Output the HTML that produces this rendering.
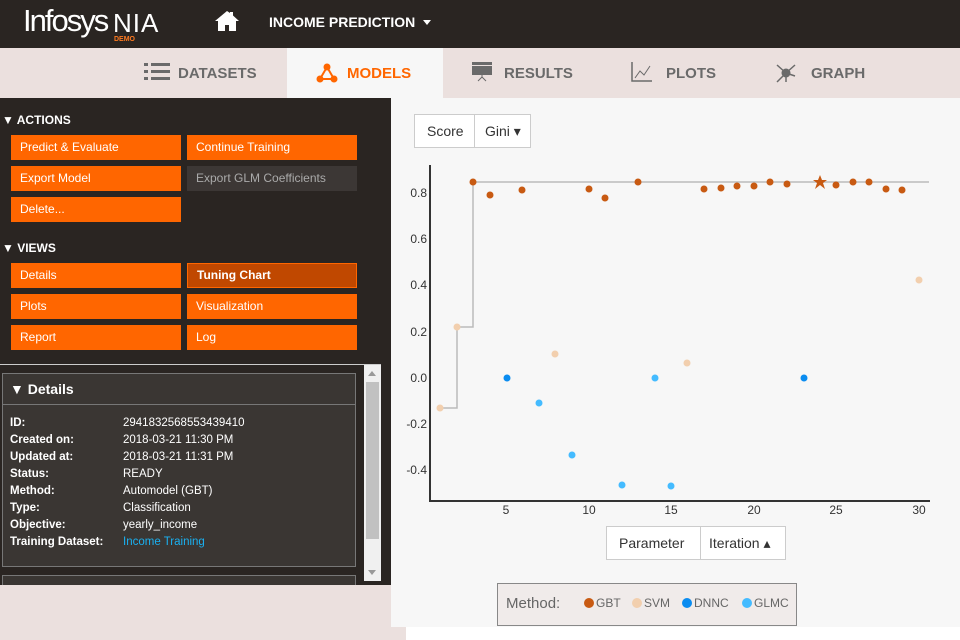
<!DOCTYPE html>
<html><head><meta charset="utf-8"><style>
*{box-sizing:border-box;margin:0;padding:0}
body{width:960px;height:640px;overflow:hidden;background:#fff;font-family:"Liberation Sans","DejaVu Sans",sans-serif;position:relative}
.abs{position:absolute}
.top{left:0;top:0;width:960px;height:48px;background:#2a2522}
.tabs{left:0;top:48px;width:960px;height:50px;background:#ebe0de}
.tab{position:absolute;top:48px;height:50px;line-height:52px;font-weight:bold;font-size:15px;color:#6a6a6a}
.side{left:0;top:98px;width:391px;height:487px;background:#2a2522}
.btn{position:absolute;height:25px;width:170px;background:#ff6600;color:#fff;font-size:12px;line-height:25px;padding-left:9px}
.hd{position:absolute;color:#fff;font-weight:bold;font-size:12px}
.lab{position:absolute;left:10px;color:#fff;font-weight:bold;font-size:11.5px}
.val{position:absolute;left:123px;color:#fff;font-size:11.5px}
</style></head><body>
<div class="abs top"></div>
<div class="abs" style="left:23px;top:3px;color:#fff;font-size:31px;letter-spacing:-2px;font-family:'Liberation Sans Narrow','Liberation Sans',sans-serif">Infosys</div>
<div class="abs" style="left:113px;top:8px;color:#fff;font-size:26px;font-weight:300;letter-spacing:1px">NIA</div>
<div class="abs" style="left:114px;top:36px;color:#ff7a20;font-size:7px;font-weight:bold">DEMO</div>
<svg class="abs" style="left:214px;top:10px" width="26" height="22" viewBox="0 0 26 22"><path d="M13 1L1 11h3v10h7v-6h4v6h7V11h3L19 5.5V2h-3v1z" fill="#fff"/></svg>
<div class="abs" style="left:269px;top:14px;color:#fff;font-weight:bold;font-size:14px">INCOME PREDICTION</div>
<div class="abs" style="left:423px;top:20px;border:4px solid transparent;border-top:5px solid #fff;border-bottom:0"></div>

<div class="abs tabs"></div>
<div class="abs" style="left:287px;top:48px;width:156px;height:50px;background:#f7f7f7"></div>
<svg class="abs" style="left:144px;top:63px" width="26" height="17"><g fill="#6a6a6a"><rect x="0" y="0" width="4" height="3"/><rect x="0" y="7" width="4" height="3"/><rect x="0" y="14" width="4" height="3"/><rect x="7" y="0" width="19" height="3"/><rect x="7" y="7" width="19" height="3"/><rect x="7" y="14" width="19" height="3"/></g></svg>
<div class="tab" style="left:178px">DATASETS</div>
<svg class="abs" style="left:316px;top:63px" width="22" height="20"><g stroke="#f60" stroke-width="2"><line x1="11" y1="4" x2="4" y2="16"/><line x1="11" y1="4" x2="18" y2="16"/><line x1="4" y1="16" x2="18" y2="16"/></g><g fill="#f60"><circle cx="11" cy="4" r="3.5"/><circle cx="4" cy="16" r="3.5"/><circle cx="18" cy="16" r="3.5"/></g></svg>
<div class="tab" style="left:347px;color:#f60">MODELS</div>
<svg class="abs" style="left:472px;top:62px" width="22" height="20"><rect x="0" y="0" width="20" height="3" fill="#6a6a6a"/><rect x="0" y="4" width="20" height="9" fill="#6a6a6a"/><path d="M10 13v3M10 15l-4 4M10 15l4 4" stroke="#6a6a6a"/></svg>
<div class="tab" style="left:504px">RESULTS</div>
<svg class="abs" style="left:631px;top:62px" width="22" height="20"><path d="M1 0v19h20" stroke="#6a6a6a" fill="none" stroke-width="1.5"/><path d="M4 16l5-7 4 4 6-9" stroke="#6a6a6a" fill="none"/></svg>
<div class="tab" style="left:666px">PLOTS</div>
<svg class="abs" style="left:775px;top:62px" width="22" height="22"><g stroke="#6a6a6a" stroke-width="1.5"><line x1="11" y1="11" x2="2" y2="3"/><line x1="11" y1="11" x2="20" y2="3"/><line x1="11" y1="11" x2="2" y2="20"/><line x1="11" y1="11" x2="20" y2="14"/><line x1="11" y1="11" x2="11" y2="20"/></g><circle cx="11" cy="11" r="4.5" fill="#6a6a6a"/></svg>
<div class="tab" style="left:811px">GRAPH</div>

<div class="abs side"></div>
<div class="hd" style="left:2px;top:113px">▼ ACTIONS</div>
<div class="btn" style="left:11px;top:135px">Predict &amp; Evaluate</div>
<div class="btn" style="left:187px;top:135px">Continue Training</div>
<div class="btn" style="left:11px;top:166px">Export Model</div>
<div class="btn" style="left:187px;top:166px;background:#3c3735;color:#aaa">Export GLM Coefficients</div>
<div class="btn" style="left:11px;top:197px">Delete...</div>
<div class="hd" style="left:2px;top:241px">▼ VIEWS</div>
<div class="btn" style="left:11px;top:263px">Details</div>
<div class="btn" style="left:187px;top:263px;background:#c04800;border:1px solid #f60;font-weight:bold;line-height:23px">Tuning Chart</div>
<div class="btn" style="left:11px;top:294px">Plots</div>
<div class="btn" style="left:187px;top:294px">Visualization</div>
<div class="btn" style="left:11px;top:325px">Report</div>
<div class="btn" style="left:187px;top:325px">Log</div>
<div class="abs" style="left:0;top:364px;width:381px;height:1px;background:#ccc"></div>
<div class="abs" style="left:364px;top:365px;width:17px;height:216px;background:#f0f0f0"></div>
<div class="abs" style="left:366px;top:382px;width:13px;height:157px;background:#c1c1c1"></div>
<div class="abs" style="left:368px;top:371px;border:4px solid transparent;border-bottom:5px solid #999;border-top:0"></div>
<div class="abs" style="left:368px;top:570px;border:4px solid transparent;border-top:5px solid #999;border-bottom:0"></div>
<div class="abs" style="left:2px;top:373px;width:354px;height:194px;background:#3a3633;border:1px solid #777"></div>
<div class="abs" style="left:2px;top:404px;width:354px;height:1px;background:#777"></div>
<div class="abs" style="left:2px;top:575px;width:354px;height:10px;background:#3a3633;border:1px solid #777;border-bottom:0"></div>
<div class="hd" style="left:10px;top:381px;font-size:14px">▼ Details</div>
<div class="lab" style="top:417px">ID:</div><div class="val" style="top:417px">2941832568553439410</div>
<div class="lab" style="top:434px">Created on:</div><div class="val" style="top:434px">2018-03-21 11:30 PM</div>
<div class="lab" style="top:451px">Updated at:</div><div class="val" style="top:451px">2018-03-21 11:31 PM</div>
<div class="lab" style="top:468px">Status:</div><div class="val" style="top:468px">READY</div>
<div class="lab" style="top:485px">Method:</div><div class="val" style="top:485px">Automodel (GBT)</div>
<div class="lab" style="top:502px">Type:</div><div class="val" style="top:502px">Classification</div>
<div class="lab" style="top:519px">Objective:</div><div class="val" style="top:519px">yearly_income</div>
<div class="lab" style="top:536px">Training Dataset:</div><div class="val" style="top:536px;color:#1ab0f0">Income Training</div>
<div class="abs" style="left:0;top:585px;width:406px;height:55px;background:#ebe0de"></div>

<div class="abs" style="left:391px;top:98px;width:569px;height:529px;background:#f7f7f7"></div>
<div class="abs" style="left:414px;top:114px;width:117px;height:34px;border:1px solid #ccc;background:#fff"></div>
<div class="abs" style="left:474px;top:114px;width:1px;height:34px;background:#ccc"></div>
<div class="abs" style="left:427px;top:123px;font-size:14px;color:#333">Score</div>
<div class="abs" style="left:485px;top:123px;font-size:14px;color:#333">Gini ▾</div>
<div class="abs" style="left:606px;top:526px;width:180px;height:34px;border:1px solid #ccc;background:#fff"></div>
<div class="abs" style="left:700px;top:526px;width:1px;height:34px;background:#ccc"></div>
<div class="abs" style="left:619px;top:535px;font-size:14px;color:#333">Parameter</div>
<div class="abs" style="left:709px;top:535px;font-size:14px;color:#333">Iteration ▴</div>
<div class="abs" style="left:497px;top:583px;width:300px;height:43px;border:1px solid #888;background:#f0ebea"></div>
<div class="abs" style="left:506px;top:595px;font-size:15px;color:#666">Method:</div>
<svg class="abs" style="left:580px;top:595px" width="215" height="16" font-size="12" fill="#666" font-family="Liberation Sans,sans-serif">
<circle cx="9" cy="8" r="5" fill="#c85a12"/><text x="16" y="12">GBT</text>
<circle cx="57" cy="8" r="5" fill="#f2cfae"/><text x="64" y="12">SVM</text>
<circle cx="107" cy="8" r="5" fill="#0a8cf0"/><text x="114" y="12">DNNC</text>
<circle cx="167" cy="8" r="5" fill="#44bbff"/><text x="174" y="12">GLMC</text>
</svg>
<svg class="abs" style="left:391px;top:98px" width="569" height="430" font-family="Liberation Sans,sans-serif" font-size="12" fill="#333">
<g transform="translate(-391,-98)">
<line x1="430" y1="165" x2="430" y2="501" stroke="#333" stroke-width="2"/>
<line x1="429" y1="501" x2="930" y2="501" stroke="#333" stroke-width="2"/>
<g text-anchor="end"><text x="427" y="197">0.8</text><text x="427" y="243">0.6</text><text x="427" y="289">0.4</text><text x="427" y="336">0.2</text><text x="427" y="382">0.0</text><text x="427" y="428">-0.2</text><text x="427" y="474">-0.4</text></g>
<g text-anchor="middle"><text x="506" y="514">5</text><text x="589" y="514">10</text><text x="671" y="514">15</text><text x="754" y="514">20</text><text x="836" y="514">25</text><text x="919" y="514">30</text></g>
<path d="M440 408H457V327H473V182H929" stroke="#bbb" fill="none" stroke-width="1.5"/>
<g fill="#f2cfae"><circle cx="440" cy="408" r="3.5"/><circle cx="457" cy="327" r="3.5"/><circle cx="555" cy="354" r="3.5"/><circle cx="687" cy="363" r="3.5"/><circle cx="919" cy="280" r="3.5"/></g>
<g fill="#0a8cf0"><circle cx="507" cy="378" r="3.5"/><circle cx="804" cy="378" r="3.5"/></g>
<g fill="#44bbff"><circle cx="655" cy="378" r="3.5"/><circle cx="539" cy="403" r="3.5"/><circle cx="572" cy="455" r="3.5"/><circle cx="622" cy="485" r="3.5"/><circle cx="671" cy="486" r="3.5"/></g>
<g fill="#c85a12"><circle cx="473" cy="182" r="3.5"/><circle cx="490" cy="195" r="3.5"/><circle cx="522" cy="190" r="3.5"/><circle cx="589" cy="189" r="3.5"/><circle cx="605" cy="198" r="3.5"/><circle cx="638" cy="182" r="3.5"/><circle cx="704" cy="189" r="3.5"/><circle cx="721" cy="188" r="3.5"/><circle cx="737" cy="186" r="3.5"/><circle cx="754" cy="186" r="3.5"/><circle cx="770" cy="182" r="3.5"/><circle cx="787" cy="184" r="3.5"/><circle cx="836" cy="185" r="3.5"/><circle cx="853" cy="182" r="3.5"/><circle cx="869" cy="182" r="3.5"/><circle cx="886" cy="189" r="3.5"/><circle cx="902" cy="190" r="3.5"/>
<path d="M820 175l2 5h5l-4 3 2 6-5-4-5 4 2-6-4-3h5z"/></g>
</g></svg>
</body></html>
